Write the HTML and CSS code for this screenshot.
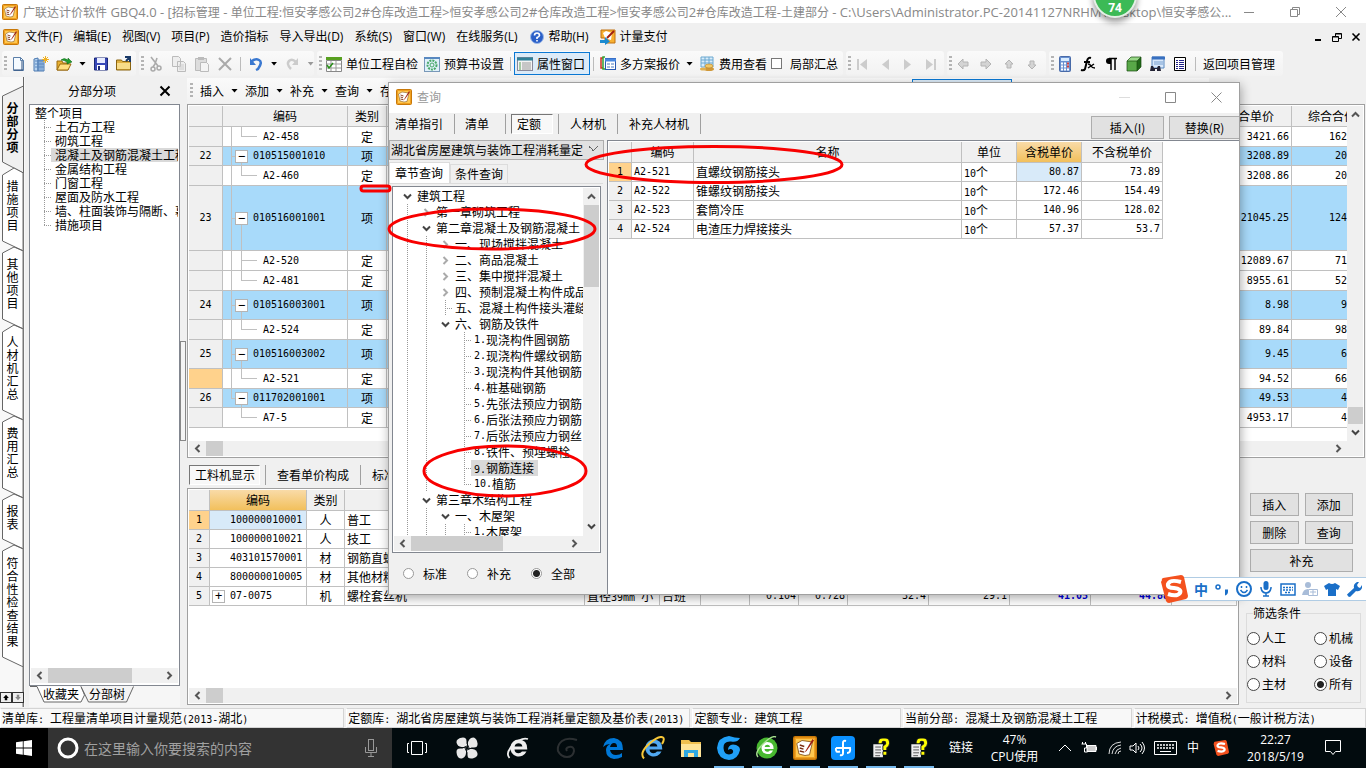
FILE: index.html
```html
<!DOCTYPE html>
<html lang="zh-CN">
<head>
<meta charset="utf-8">
<title>广联达计价软件 GBQ4.0</title>
<link rel="stylesheet" href="styles.css">
</head>
<body>
<svg class="defs" aria-hidden="true">
  <symbol id="app" viewBox="0 0 16 16"><rect x=".5" y=".5" width="15" height="15" rx="1" fill="#f0a020" stroke="#c87808"/><rect x="2" y="2" width="12" height="12" fill="#ffc850"/><path d="M2.500 5l3.500-2 7 1-2 8.500-3 .5-4-1z" fill="#fff" stroke="#8a5a20" stroke-width=".6"/><path d="M4.500 6l3 1M4.500 8l2.500.8M4.500 10l3 .8" stroke="#7a2c10" stroke-width=".9" fill="none"/><path d="M13 2l1 1-5 7-1.300 1z" fill="#a02010"/></symbol>
  <symbol id="left" viewBox="0 0 9 9"><path d="M6.500 1L3 4.500 6.500 8" fill="none" stroke="#555" stroke-width="2"/></symbol>
  <symbol id="right" viewBox="0 0 9 9"><path d="M2.500 1L6 4.500 2.500 8" fill="none" stroke="currentColor" stroke-width="2"/></symbol>
  <symbol id="up" viewBox="0 0 9 9"><path d="M1 6.500L4.500 3 8 6.500" fill="none" stroke="#555" stroke-width="2"/></symbol>
  <symbol id="down" viewBox="0 0 9 9"><path d="M1 2.500L4.500 6 8 2.500" fill="none" stroke="#444" stroke-width="2"/></symbol>
  <symbol id="sogou" viewBox="0 0 28 28"><path d="M2 5Q1 4 3 3L21 0Q23 0 24 2L28 21Q28 23 26 24L9 28Q7 28 6 26L1 7Z" fill="#f4511e"/><path d="M21 7Q10 4 8 9Q7 13 14 13Q22 14 20 18Q17 22 8 19" fill="none" stroke="#fff" stroke-width="4"/></symbol>
  <symbol id="note" viewBox="0 0 20 20"><path d="M2 6h10v14H2z" fill="#eee"/><path d="M4 9h6M4 12h6M4 15h6M4 18h5" stroke="#555"/><path d="M9 5Q9 1 13 1T17 5Q17 7 14 9V12M14 14v3" fill="none" stroke="#222" stroke-width="5"/><path d="M9 5Q9 1 13 1T17 5Q17 7 14 9V12M14 14v3" fill="none" stroke="#ff0" stroke-width="3"/></symbol>
  <symbol id="ee" viewBox="0 0 24 24"><path d="M12.500 3.500a8.500 8.500 0 108 12h-4.500q-1.200 1.800-3.500 1.800-3.700 0-4-3.800h12.800Q21.500 3.500 12.500 3.500zM8.600 10.500q.6-3.200 3.900-3.200t3.900 3.200z" fill="currentColor" fill-rule="evenodd"/></symbol>
</svg>

<header class="title">
  <svg class="ic"><use href="#app"/></svg>
  <h1>广联达计价软件<span> GBQ4.0 - [</span>招标管理<span> - </span>单位工程<span>:</span>恒安孝感公司<span>2#</span>仓库改造工程<span>&gt;</span>恒安孝感公司<span>2#</span>仓库改造工程<span>&gt;</span>恒安孝感公司<span>2#</span>仓库改造工程<span>-</span>土建部分<span> - C:\Users\Administrator.PC-20141127NRHM\Desktop\</span>恒安孝感公<span>...</span></h1>
  <div class="winbtns">
    <button aria-label="最小化"><svg viewBox="0 0 10 10"><path d="M0 5.500h10" stroke="#888"/></svg></button>
    <button aria-label="还原"><svg viewBox="0 0 10 10"><path d="M.5 2.500h7v7h-7zM2.500 2.500v-2h7v7h-2" stroke="#888" fill="none"/></svg></button>
    <button aria-label="关闭"><svg viewBox="0 0 10 10"><path d="M0 0l10 10M10 0L0 10" stroke="#888"/></svg></button>
  </div>
</header>
<div class="speed">74</div>

<nav class="menu">
  <svg class="ic"><use href="#app"/></svg>
  <button>文件(F)</button><button>编辑(E)</button><button>视图(V)</button><button>项目(P)</button><button>造价指标</button><button>导入导出(D)</button><button>系统(S)</button><button>窗口(W)</button><button>在线服务(L)</button>
  <button><svg class="ic" viewBox="0 0 16 16"><circle cx="8" cy="8" r="6.500" fill="#2a5fc8" stroke="#9ab8e8"/><path d="M5.500 6.500Q5.500 4 8 4T10.500 6.500Q10 8 8 8.500v1.500M8 11v1.500" fill="none" stroke="#fff" stroke-width="1.600"/></svg>帮助(H)</button>
  <button><svg class="ic" viewBox="0 0 16 16"><path d="M1 1h14v13H5V9H1z" fill="#f8b030" stroke="#c07010"/><path d="M3 4l3-2 6 2-1 7-6-2z" fill="#fff"/><path d="M14 2L7 9" stroke="#a02010" stroke-width="2"/><path d="M0 11h5V8l5 4.500-5 3.500v-2H0z" fill="#1a8ad0"/></svg>计量支付</button>
  <div class="mdi"><button aria-label="最小化">
    <svg viewBox="0 0 10 10"><path d="M2 8h6" stroke="#000" stroke-width="2"/></svg></button><button aria-label="还原"><svg viewBox="0 0 10 10"><path d="M.5 4.500h6v5h-6zM.5 5h6M3.500 4V1.500h6v5H7M3.500 2h6" fill="none" stroke="#000"/></svg></button><button aria-label="关闭"><svg viewBox="0 0 10 10"><path d="M1.500 1.500l7 7M8.500 1.500l-7 7" stroke="#000" stroke-width="1.600"/></svg></button>
  </div>
</nav>

<div class="bars">
  <div class="bar b1">
    <button aria-label="新建"><svg class="ic" viewBox="0 0 16 16"><path d="M3.500 1.500h7l3 3v10h-10z" fill="#f4faff" stroke="#5a7ea8"/><path d="M10.500 1.500v3h3" fill="none" stroke="#5a7ea8"/><path d="M12 5v9M4 14h9" stroke="#2a4a78"/></svg></button>
    <button aria-label="新建项目"><svg class="ic" viewBox="0 0 16 16"><path d="M1 3l4-1v13H1zM5 4h6v11H5z" fill="#b8d4f0" stroke="#4a78b0"/><path d="M2 5h9M2 8h9M2 11h9M7 4v11M9 4v11" stroke="#5a88c0"/><path d="M12.500 0v7M9 3.500h7M10 1l5 5M15 1l-5 5" stroke="#f0b020"/></svg></button>
    <button aria-label="打开"><svg class="ic" viewBox="0 0 16 16"><path d="M1 14V5h5l1 2h5v7z" fill="#e8b030" stroke="#9a6a10"/><path d="M1 14l3-6h11l-3 6z" fill="#ffe080" stroke="#9a6a10"/><path d="M5 4Q8 1 12 4V2l4 4-5 2V6Q8 4 5 4z" fill="#20a030" stroke="#0a6010" stroke-width=".5"/></svg></button>
    <i class="caret"></i>
    <button aria-label="保存"><svg class="ic" viewBox="0 0 16 16"><path d="M1.500 2h13v12h-13z" fill="#3848b8" stroke="#1a2878"/><path d="M4 2h8v5H4z" fill="#e8ecff"/><path d="M4 9h8v5H4z" fill="#fff"/><path d="M5 10h2v4H5z" fill="#1a2878"/></svg></button>
    <button aria-label="归档"><svg class="ic" viewBox="0 0 16 16"><path d="M.5 4h5l1 1.500h8V14H.5z" fill="#e0b040" stroke="#8a6410"/><path d="M1 7h13v6H1z" fill="#f8dc88"/><path d="M9 1h5v5M14 1l-4 4" stroke="#1a3a68" stroke-width="2" fill="none"/></svg></button>
  </div>
  <div class="bar b2">
    <button aria-label="剪切"><svg class="ic" viewBox="0 0 16 16"><path d="M3 1l7 9M9 2L7 8l-2 3" stroke="#aaa" stroke-width="1.600" fill="none"/><circle cx="11" cy="12" r="2" fill="none" stroke="#aaa" stroke-width="1.500"/><circle cx="5" cy="13" r="2" fill="none" stroke="#aaa" stroke-width="1.500"/></svg></button>
    <button aria-label="复制"><svg class="ic" viewBox="0 0 16 16"><path d="M1.500.5h6l2 2v8h-8zM6.500 5.500h6l2 2v8h-8z" fill="#eee" stroke="#bbb"/><path d="M8 9h5M8 11h5M8 13h5" stroke="#ccc"/></svg></button>
    <button aria-label="粘贴"><svg class="ic" viewBox="0 0 16 16"><path d="M1.500 2.500h11v12h-11z" fill="#ddd" stroke="#bbb"/><path d="M4 1h6v3H4z" fill="#bbb"/><path d="M6.500 6.500h6l2 2v7h-8z" fill="#f4f4f4" stroke="#bbb"/></svg></button>
    <button aria-label="删除"><svg class="ic" viewBox="0 0 16 16"><path d="M2 2l12 12M14 2L2 14" stroke="#aaa" stroke-width="2"/></svg></button>
    <i class="sep"></i>
    <button aria-label="撤销"><svg class="ic" viewBox="0 0 16 16"><path d="M3 6Q7 2 11 4T10 13l-2 1" fill="none" stroke="#3a78d0" stroke-width="2.500"/><path d="M2 2v7h6z" fill="#3a78d0"/></svg></button>
    <i class="caret"></i>
    <button aria-label="恢复"><svg class="ic" viewBox="0 0 16 16"><path d="M12 6Q8 2 5 5T7 13" fill="none" stroke="#ccc" stroke-width="2.500"/><path d="M14 2v7H8z" fill="#ccc"/></svg></button>
    <i class="caret dim"></i>
  </div>
  <div class="bar b3">
    <button><svg class="ic" viewBox="0 0 16 16"><path d="M0 1h16v3H0z" fill="#58a020"/><path d="M.5 4.500h15v11H.5z" fill="#fff" stroke="#888"/><path d="M1 8h14M1 12h14M5 5v10M10 5v10" stroke="#999"/><path d="M1 9l2 3 4-5" fill="none" stroke="#289018" stroke-width="1.500"/></svg>单位工程自检</button>
    <button><svg class="ic" viewBox="0 0 16 16"><rect x=".5" y="1.500" width="15" height="14" fill="#e0f0fa" stroke="#7898b8"/><path d="M0 2h16" stroke="#5888c0" stroke-width="2"/><circle cx="8" cy="9" r="4.500" fill="none" stroke="#48a868" stroke-width="2" stroke-dasharray="2 1"/><circle cx="8" cy="9" r="2" fill="none" stroke="#48a868"/></svg>预算书设置</button>
    <i class="sep"></i>
    <button class="on"><svg class="ic" viewBox="0 0 16 16"><rect x=".5" y="1.500" width="15" height="13" fill="#f4f4f4" stroke="#889"/><path d="M0 3h16" stroke="#308098" stroke-width="3"/><path d="M2 7h2M2 9h2M2 11h2M2 13h2" stroke="#58a058"/><path d="M5 7h9M5 9h9M5 11h9M5 13h9" stroke="#999"/></svg>属性窗口</button>
    <i class="sep"></i>
    <button><svg class="ic" viewBox="0 0 16 16"><path d="M3 2H1v10h2" fill="none" stroke="#d03020" stroke-width="1.500"/><path d="M5 1H3v12h2" fill="none" stroke="#30a030" stroke-width="1.500"/><rect x="5.500" y="2.500" width="10" height="11" fill="#fff" stroke="#2858b0"/><path d="M5 4h11" stroke="#4888e0" stroke-width="3"/><path d="M7 8h3M11 8h3M7 11h3M11 11h3" stroke="#4878c0"/></svg>多方案报价</button>
    <i class="caret"></i>
    <button><svg class="ic" viewBox="0 0 16 16"><path d="M2 1h12v10H2z" fill="#d8ecfa" stroke="#6aa8d0"/><path d="M2 4h12M2 7h12M6 1v10M10 1v10" stroke="#6aa8d0"/><ellipse cx="10" cy="13" rx="5" ry="2" fill="#d09838"/><ellipse cx="10" cy="10" rx="4" ry="2" fill="#f0c868" stroke="#b88020" stroke-width=".6"/><ellipse cx="4" cy="13" rx="3" ry="1.500" fill="#e0b050"/></svg>费用查看</button>
    <label><input type="checkbox">局部汇总</label>
  </div>
  <div class="bar b4">
    <button aria-label="首行"><svg class="ic" viewBox="0 0 16 16"><path d="M4 3v11" stroke="#ccc" stroke-width="2"/><path d="M13 3v11L6 8.500z" fill="#ccc"/></svg></button>
    <button aria-label="上一行"><svg class="ic" viewBox="0 0 16 16"><path d="M12 3v11L5 8.500z" fill="#ccc"/></svg></button>
    <button aria-label="下一行"><svg class="ic" viewBox="0 0 16 16"><path d="M4 3v11l7-5.500z" fill="#ccc"/></svg></button>
    <button aria-label="末行"><svg class="ic" viewBox="0 0 16 16"><path d="M12 3v11" stroke="#ccc" stroke-width="2"/><path d="M3 3v11l7-5.500z" fill="#ccc"/></svg></button>
  </div>
  <div class="bar b5">
    <button aria-label="左移"><svg class="ic" viewBox="0 0 16 16"><path d="M3 8l5-5v3h5v4H8v3z" fill="#d4d4d4" stroke="#b4b4b4"/></svg></button>
    <button aria-label="右移"><svg class="ic" viewBox="0 0 16 16"><path d="M13 8L8 3v3H3v4h5v3z" fill="#d4d4d4" stroke="#b4b4b4"/></svg></button>
    <button aria-label="上移"><svg class="ic" viewBox="0 0 16 16"><path d="M8 4l4 4h-2v4H6V8H4z" fill="#d4d4d4" stroke="#b4b4b4"/></svg></button>
    <button aria-label="下移"><svg class="ic" viewBox="0 0 16 16"><path d="M8 13l4-4h-2V5H6v4H4z" fill="#d4d4d4" stroke="#b4b4b4"/></svg></button>
  </div>
  <div class="bar b6">
    <button aria-label="计算器"><svg class="ic" viewBox="0 0 16 16"><rect x="2.500" y=".5" width="11" height="15" rx="1" fill="#6890d0" stroke="#486aa8"/><path d="M4 2h8v3H4z" fill="#d8ecff"/><path d="M4 7.500h8M4 10.500h8M4 13.500h8" stroke="#fff" stroke-width="2" stroke-dasharray="2 1"/><path d="M10 7.500h2M10 10.500h2" stroke="#d04040" stroke-width="2"/></svg></button>
    <button aria-label="函数"><svg class="ic" viewBox="0 0 16 16"><path d="M11 2Q8 1 7 5L5 13Q4 15 1 14M4 6h6" fill="none" stroke="#000" stroke-width="2"/><path d="M8 8q2 0 3 2t4 2M14 8l-6 4" fill="none" stroke="#000" stroke-width="1.500"/></svg></button>
    <button aria-label="段落"><svg class="ic" viewBox="0 0 16 16"><path d="M14 2.500H6M8 2v12M12 2v12" stroke="#000" stroke-width="1.500"/><path d="M8 2H6a3 3 0 000 6h2z"/></svg></button>
    <button aria-label="图元"><svg class="ic" viewBox="0 0 16 16"><path d="M1 5l4-4h10l-4 4z" fill="#98d888"/><path d="M1 5h10v10H1z" fill="#58a848"/><path d="M11 5l4-4v10l-4 4z" fill="#206818"/><path d="M1 5l4-4h10v10l-4 4H1zM1 5h10v10M11 5l4-4" fill="none" stroke="#184c10" stroke-width=".7"/></svg></button>
    <button aria-label="查找"><svg class="ic" viewBox="0 0 16 16"><path d="M3 1h12v11H3z" fill="#d8e8fa" stroke="#5888c0"/><path d="M3 2h13" stroke="#3870c0" stroke-width="3"/><path d="M5 6h9M5 8h9" stroke="#78a0d0"/><path d="M2 10h2l1 2h3l1-2h2l1 5H8v-2H6v2H1z" fill="#223"/></svg></button>
    <button aria-label="报表"><svg class="ic" viewBox="0 0 16 16"><path d="M2.500 1.500h11v13h-11z" fill="#fff" stroke="#000"/><path d="M4 4.500h2M4 6.500h2M4 8.500h2M4 10.500h2M4 12.500h2M7 4.500h5M7 6.500h5M7 8.500h5M7 10.500h5M7 12.500h5" stroke="#228"/></svg></button>
    <i class="sep"></i>
    <button>返回项目管理</button>
  </div>
</div>

<main>
  <nav class="rail">
    <svg class="rail-lines" viewBox="0 0 24 630"><g fill="#fff" stroke="#666"><path d="M23.500 0V9L2.500 19V85L23.500 96z" fill="#f0f0f0"/><path d="M23.500 96L14 91 2.500 98v66l21 10zM23.500 174L14 170 2.500 176v66l21 10zM23.500 252L14 248 2.500 255v78l21 10zM23.500 343L14 339 2.500 345v66l21 10zM23.500 421L14 417 2.500 423v39l21 10zM23.500 472L14 468 2.500 474v106l21 10z"/></g><path d="M23.500 96V630" stroke="#777" stroke-width="2"/></svg>
    <button class="cur">分部分项</button><button>措施项目</button><button>其他项目</button><button>人材机汇总</button><button>费用汇总</button><button>报表</button><button>符合性检查结果</button>
    <div class="railnav"><button aria-label="向上"><svg viewBox="0 0 11 11"><path d="M5.500 2L9 6H7v3H4V6H2z" fill="#000"/></svg></button><button aria-label="向下"><svg viewBox="0 0 11 11"><path d="M5.500 9L9 5H7V2H4v3H2z" fill="#888"/></svg></button></div>
  </nav>

  <section class="side">
    <div class="side-head"><h2>分部分项</h2><button aria-label="关闭"><svg viewBox="0 0 12 12"><path d="M1.500 1.500l9 9M10.500 1.500l-9 9" stroke="#000" stroke-width="2"/></svg></button></div>
    <div class="side-box">
      <ul class="st"><li class="root">整个项目</li><li>土石方工程</li><li>砌筑工程</li><li class="sel">混凝土及钢筋混凝土工程</li><li>金属结构工程</li><li>门窗工程</li><li>屋面及防水工程</li><li>墙、柱面装饰与隔断、幕墙</li><li class="last">措施项目</li></ul>
      <div class="hs"><svg class="ar"><use href="#left"/></svg><i class="thumb t-side"></i><svg class="ar end"><use href="#right"/></svg></div>
    </div>
    <div class="side-tabs"><svg viewBox="0 0 150 20"><path d="M1 .5h7l7 15.500h37l3.500-7L52 .5" fill="#fff" stroke="#666"/><path d="M52 .5l7.500 15.500h38l7-15.500" fill="#f4f4f4" stroke="#666"/></svg><button>收藏夹</button><button>分部树</button></div>
  </section>
  <div class="split"><i></i></div>

  <section class="work">
    <div class="sub">
      <button>插入</button><i class="caret"></i><button>添加</button><i class="caret"></i><button>补充</button><i class="caret"></i><button>查询</button><i class="caret"></i><button>存档</button><i class="subon"></i>
    </div>
    <div class="box top">
      <div class="body">
        <div class="view">
        <table class="g main">
          <colgroup><col class="w34"><col class="w125"><col class="w39"><col><col class="w83"><col class="w55"></colgroup>
          <thead><tr><th></th><th>编码</th><th>类别</th><th></th><th>综合单价</th><th class="cut">综合合价</th></tr></thead>
          <tbody>
          <tr><th></th><td class="c">A2-458</td><td>定</td><td></td><td class="r">3421.66</td><td class="e">162</td></tr>
          <tr class="p r19"><th>22</th><td class="p"><button>−</button>010515001010</td><td>项</td><td></td><td class="r">3208.89</td><td class="e">20</td></tr>
          <tr><th></th><td class="c">A2-460</td><td>定</td><td></td><td class="r">3208.86</td><td class="e">20</td></tr>
          <tr class="p r65"><th>23</th><td class="p"><button>−</button>010516001001</td><td>项</td><td></td><td class="r">21045.25</td><td class="e">124</td></tr>
          <tr><th></th><td class="c mid">A2-520</td><td>定</td><td></td><td class="r">12089.67</td><td class="e">71</td></tr>
          <tr><th></th><td class="c">A2-481</td><td>定</td><td></td><td class="r">8955.61</td><td class="e">52</td></tr>
          <tr class="p r29"><th>24</th><td class="p"><button>−</button>010516003001</td><td>项</td><td></td><td class="r">8.98</td><td class="e">9</td></tr>
          <tr><th></th><td class="c">A2-524</td><td>定</td><td></td><td class="r">89.84</td><td class="e">98</td></tr>
          <tr class="p r29"><th>25</th><td class="p"><button>−</button>010516003002</td><td>项</td><td></td><td class="r">9.45</td><td class="e">6</td></tr>
          <tr><th class="hot"></th><td class="c">A2-521</td><td>定</td><td></td><td class="r">94.52</td><td class="e">66</td></tr>
          <tr class="p r19"><th>26</th><td class="p fin"><button>−</button>011702001001</td><td>项</td><td></td><td class="r">49.53</td><td class="e">4</td></tr>
          <tr><th></th><td class="c fin">A7-5</td><td>定</td><td></td><td class="r">4953.17</td><td class="e">4</td></tr>
          </tbody>
        </table>
        </div>
        <div class="vs"><svg class="ar"><use href="#up"/></svg><i class="thumb t-top"></i><svg class="ar"><use href="#down"/></svg></div>
      </div>
      <div class="hs wide"><svg class="ar"><use href="#left"/></svg><i class="thumb t-min"></i><svg class="ar end"><use href="#right"/></svg></div>
    </div>

    <div class="tabs low"><button class="on">工料机显示</button><button>查看单价构成</button><button>标准换算</button></div>

    <div class="lower">
      <div class="box bot">
        <div class="view">
        <table class="g res">
          <colgroup><col class="w21"><col class="w97"><col class="w38"><col class="w240"><col class="w75"><col class="w41"><col class="w49"><col class="w49"><col class="w49"><col class="w81"><col class="w81"><col class="w81"><col class="w81"><col></colgroup>
          <thead><tr><th></th><th class="hh">编码</th><th>类别</th><th></th><th></th><th></th><th></th><th></th><th></th><th></th><th></th><th></th><th></th><th></th></tr></thead>
          <tbody>
          <tr><th class="hot">1</th><td class="k cell">100000010001</td><td>人</td><td class="l">普工</td><td></td><td></td><td></td><td></td><td></td><td></td><td></td><td></td><td></td><td></td></tr>
          <tr><th>2</th><td class="k">100000010021</td><td>人</td><td class="l">技工</td><td></td><td></td><td></td><td></td><td></td><td></td><td></td><td></td><td></td><td></td></tr>
          <tr><th>3</th><td class="k">403101570001</td><td>材</td><td class="l">钢筋直螺纹接头</td><td></td><td></td><td></td><td></td><td></td><td></td><td></td><td></td><td></td><td></td></tr>
          <tr><th>4</th><td class="k">800000010005</td><td>材</td><td class="l">其他材料费</td><td></td><td></td><td></td><td></td><td></td><td></td><td></td><td></td><td></td><td></td></tr>
          <tr><th>5</th><td class="k x"><button>+</button>07-0075</td><td>机</td><td class="l">螺栓套丝机</td><td class="l">直径<span class="n">39mm </span>小</td><td class="l">台班</td><td></td><td class="r">0.104</td><td class="r">0.728</td><td class="r">32.4</td><td class="r">29.1</td><td class="r blue">41.05</td><td class="r blue">44.88</td><td></td></tr>
          </tbody>
        </table>
        </div>
        <div class="hs"><svg class="ar"><use href="#left"/></svg><i class="thumb t-min"></i><svg class="ar end"><use href="#right"/></svg></div>
      </div>
      <aside class="acts">
        <div class="btns"><button>插入</button><button>添加</button><button>删除</button><button>查询</button><button class="full">补充</button><button class="full" aria-label="替换"></button></div>
        <fieldset><legend>筛选条件</legend>
          <label><input type="radio" name="f">人工</label><label><input type="radio" name="f">机械</label>
          <label><input type="radio" name="f">材料</label><label><input type="radio" name="f">设备</label>
          <label><input type="radio" name="f">主材</label><label><input type="radio" name="f" checked>所有</label>
        </fieldset>
      </aside>
    </div>
  </section>
</main>

<footer class="status">
  <span class="s1">清单库<span class="n">: </span>工程量清单项目计量规范<span class="n">(2013-</span>湖北<span class="n">)</span></span>
  <span class="s2">定额库<span class="n">: </span>湖北省房屋建筑与装饰工程消耗量定额及基价表<span class="n">(2013)</span></span>
  <span class="s3">定额专业<span class="n">: </span>建筑工程</span>
  <span class="s4">当前分部<span class="n">: </span>混凝土及钢筋混凝土工程</span>
  <span class="s5">计税模式<span class="n">: </span>增值税<span class="n">(</span>一般计税方法<span class="n">)</span></span>
</footer>

<div class="task">
  <button class="start" aria-label="开始"><svg viewBox="0 0 16 16"><path d="M0 2.300l6.800-1v6.300H0zM7.600 1.200L16 0v7.600H7.600zM0 8.400h6.800v6.300L0 13.700zM7.600 8.400H16V16l-8.400-1.200z" fill="#fff"/></svg></button>
  <label class="search"><svg class="ring" viewBox="0 0 22 22"><circle cx="11" cy="11" r="9" fill="none" stroke="#fff" stroke-width="3"/></svg><input type="text" placeholder="在这里输入你要搜索的内容"><svg class="mic" viewBox="0 0 12 18"><rect x="3.500" y=".5" width="5" height="11" fill="none" stroke="#999"/><path d="M.5 8v5.500h11V8M6 14v3M3 17.500h6" fill="none" stroke="#999"/></svg></label>
  <div class="apps">
    <button aria-label="任务视图"><svg viewBox="0 0 24 24"><path d="M6.500 5.500h11v13h-11zM4 7.500H2.500v9H4M20 7.500h1.500v9H20" fill="none" stroke="#fff"/></svg></button>
    <button class="a2" aria-label="应用"><svg viewBox="0 0 24 24"><g fill="#e8e8e8"><path d="M12 11Q4 12 2 8T5 2Q11 0 12 5z"/><path d="M13 12Q12 4 16 2T22 5Q24 11 19 12z"/><path d="M12 13Q20 12 22 16T19 22Q13 24 12 19z"/><path d="M11 12Q12 20 8 22T2 19Q0 13 5 12z"/></g><path d="M12 2Q11 8 14 12M22 12Q16 11 12 14M12 22Q13 16 10 12M2 12Q8 13 12 10" fill="none" stroke="#020b0e"/></svg></button>
    <button class="a3" aria-label="浏览器"><svg viewBox="0 0 24 24" color="#eee"><use href="#ee"/><path d="M3.500 22Q-1 17 7 9T22 3" fill="none" stroke="#eee" stroke-width="1.800"/></svg></button>
    <button class="a4" aria-label="游戏"><svg viewBox="0 0 24 24"><path d="M22 4Q12 1 7 5T3 15Q6 21 12 21T19 15Q19 10 14 11Q10 12 12 15" fill="none" stroke="#2c3032" stroke-width="2"/></svg></button>
    <button class="a5" aria-label="Edge"><svg viewBox="0 0 24 24"><path d="M2 11Q4 2 13 2Q22 3 22 14H9Q10 19 15 19Q19 19 21 17V21Q17 23 13 23Q5 22 5 14Q5 10 9 8Q5 8 2 11M9 11H16Q16 7 13 7Q10 7 9 11" fill="#0078d7" fill-rule="evenodd"/></svg></button>
    <button aria-label="IE"><svg viewBox="0 0 24 24" color="#50a8f0"><use href="#ee"/><path d="M3 22.500Q-2 17 8 8T22 1.500Q24 3 21 8" fill="none" stroke="#f8c838" stroke-width="2"/></svg></button>
    <button aria-label="资源管理器"><svg viewBox="0 0 24 24"><path d="M2 4h8l2 2h10v14H2z" fill="#f0c050"/><path d="M2 8h20v13H2z" fill="#ffe498"/><path d="M5 21v-7h14v7h-4v-4H9v4z" fill="#30a8e0"/></svg></button>
    <button class="run" aria-label="广联达"><svg viewBox="0 0 24 24"><path d="M23 2Q20 7 14 5.500Q6 5 6.500 12Q7 18.500 12 18.500Q17 18 16 14.500Q14 12 11 14Q11 9 16 8.500Q23 9 23 14Q21 23.500 12 24Q1 23 0 12Q1 1 12 0Q18 2 23 2z" fill="#20a0f8"/></svg></button>
    <button class="run" aria-label="安全浏览器"><svg viewBox="0 0 24 24" color="#fff"><circle cx="12" cy="12" r="10.500" fill="#48b830"/><use href="#ee" x="3.500" y="3.500" width="17" height="17"/><path d="M3 21Q-1 17 8 8T21 1" fill="none" stroke="#a8e090" stroke-width="1.500"/></svg></button>
    <button class="run" aria-label="计价"><svg viewBox="0 0 16 16"><use href="#app"/></svg></button>
    <button class="run" aria-label="助手"><svg viewBox="0 0 24 24"><rect width="24" height="24" rx="4" fill="#0a90ff"/><path d="M15 5Q12 4 12 7V17Q12 20 9 19M5 12H19Q20 17 16 17M5 12Q4 17 9 15.500" fill="none" stroke="#fff" stroke-width="2"/></svg></button>
    <button class="run" aria-label="提示一"><svg viewBox="0 0 20 20"><use href="#note" x="2" y="2" width="16" height="16"/></svg></button>
    <button class="run" aria-label="提示二"><svg viewBox="0 0 20 20"><use href="#note" x="2" y="2" width="16" height="16"/></svg></button>
  </div>
  <div class="tray">
    <button class="link">链接</button>
    <div class="cpu">47%<br>CPU使用</div>
    <svg class="t1" viewBox="0 0 12 12"><path d="M0 9l6-6 6 6" stroke="#fff" fill="none"/></svg>
    <svg class="t2" viewBox="0 0 16 16"><path d="M5.500 5.500h9v6h-9z" stroke="#fff" fill="#ccc"/><path d="M0 4h5v4H3v4h3M1 4V2M4 4V2M15 7v3" stroke="#fff" fill="none"/></svg>
    <svg class="t3" viewBox="0 0 14 14"><path d="M1 13Q1 2 13 1M4 13Q5 5 13 4M7 13Q8 8 13 7M10 13Q10 10 13 10" stroke="#ddd" fill="none"/></svg>
    <svg class="t4" viewBox="0 0 16 14"><path d="M1 5h3l3-3v10L4 9H1z M9 5q2 2 0 4M11 3q4 4 0 8M13 1q5 6 0 12" stroke="#fff" fill="none"/></svg>
    <svg class="t5" viewBox="0 0 23 14"><path d="M.5 .5h22v13H.5z" stroke="#fff" fill="none"/><path d="M3 4h17M3 7h17" stroke="#fff" stroke-width="1.500" stroke-dasharray="2 1"/><path d="M6 10.500h11" stroke="#fff"/></svg>
    <span class="ime">中</span>
    <svg class="t6" viewBox="0 0 28 28"><use href="#sogou"/></svg>
    <div class="clock">22:27<br>2018/5/19</div>
    <svg class="t7" viewBox="0 0 18 18"><path d="M1.500 1.500h15v11h-5l-2.500 3-2.500-3h-5z" stroke="#fff" fill="none"/></svg>
  </div>
</div>

<div class="dlg" role="dialog" aria-label="查询">
  <div class="dt"><svg class="ic"><use href="#app"/></svg><h2>查询</h2>
    <button aria-label="最小化"><svg viewBox="0 0 11 11"><path d="M0 5.500h11" stroke="#ddd"/></svg></button>
    <button aria-label="最大化"><svg viewBox="0 0 11 11"><path d="M.5.500h10v10H.5z" stroke="#888" fill="none"/></svg></button>
    <button aria-label="关闭"><svg viewBox="0 0 11 11"><path d="M.5.500l10 10M10.500.500l-10 10" stroke="#888"/></svg></button></div>
  <div class="dbar">
    <div class="tabs"><button>清单指引</button><button>清单</button><button class="on">定额</button><button>人材机</button><button>补充人材机</button></div>
    <button class="push">插入(I)</button><button class="push">替换(R)</button>
  </div>
  <div class="dmain">
    <div class="dl">
      <select aria-label="定额库"><option>湖北省房屋建筑与装饰工程消耗量定</option></select>
      <div class="dtabs"><button class="on">章节查询</button><button>条件查询</button></div>
      <div class="dtree">
        <div class="tv">
          <ul>
            <li><svg class="o"><use href="#down"/></svg>建筑工程</li>
            <li><i class="v"></i><svg class="k"><use href="#right"/></svg>第一章砌筑工程</li>
            <li><i class="v"></i><svg class="o"><use href="#down"/></svg>第二章混凝土及钢筋混凝土</li>
            <li><i class="v"></i><i class="v"></i><svg class="k"><use href="#right"/></svg>一、现场搅拌混凝土</li>
            <li><i class="v"></i><i class="v"></i><svg class="k"><use href="#right"/></svg>二、商品混凝土</li>
            <li><i class="v"></i><i class="v"></i><svg class="k"><use href="#right"/></svg>三、集中搅拌混凝土</li>
            <li><i class="v"></i><i class="v"></i><svg class="k"><use href="#right"/></svg>四、预制混凝土构件成品</li>
            <li><i class="v"></i><i class="v"></i><i class="t"></i>五、混凝土构件接头灌缝</li>
            <li><i class="v"></i><i class="v"></i><svg class="o"><use href="#down"/></svg>六、钢筋及铁件</li>
            <li><i class="v"></i><i class="v"></i><i></i><i class="t"></i><span class="n">1.</span>现浇构件圆钢筋</li>
            <li><i class="v"></i><i class="v"></i><i></i><i class="t"></i><span class="n">2.</span>现浇构件螺纹钢筋</li>
            <li><i class="v"></i><i class="v"></i><i></i><i class="t"></i><span class="n">3.</span>现浇构件其他钢筋</li>
            <li><i class="v"></i><i class="v"></i><i></i><i class="t"></i><span class="n">4.</span>桩基础钢筋</li>
            <li><i class="v"></i><i class="v"></i><i></i><i class="t"></i><span class="n">5.</span>先张法预应力钢筋</li>
            <li><i class="v"></i><i class="v"></i><i></i><i class="t"></i><span class="n">6.</span>后张法预应力钢筋</li>
            <li><i class="v"></i><i class="v"></i><i></i><i class="t"></i><span class="n">7.</span>后张法预应力钢丝</li>
            <li><i class="v"></i><i class="v"></i><i></i><i class="t"></i><span class="n">8.</span>铁件、预埋螺栓</li>
            <li><i class="v"></i><i class="v"></i><i></i><i class="t"></i><span class="pick"><span class="n">9.</span>钢筋连接</span></li>
            <li><i class="v"></i><i class="v"></i><i></i><i class="t h"></i><span class="n">10.</span>植筋</li>
            <li><i class="v"></i><svg class="o"><use href="#down"/></svg>第三章木结构工程</li>
            <li><i class="v"></i><i class="v"></i><svg class="o"><use href="#down"/></svg>一、木屋架</li>
            <li><i class="v"></i><i class="v"></i><i class="v"></i><i class="t"></i><span class="n">1.</span>木屋架</li>
          </ul>
          <div class="vs"><svg class="ar"><use href="#up"/></svg><i class="thumb t-tree"></i><svg class="ar end"><use href="#down"/></svg></div>
        </div>
        <div class="hs wide"><svg class="ar"><use href="#left"/></svg><i class="thumb t-treeh"></i><svg class="ar end"><use href="#right"/></svg></div>
      </div>
      <div class="dradio"><label><input type="radio" name="k">标准</label><label><input type="radio" name="k">补充</label><label><input type="radio" name="k" checked>全部</label></div>
    </div>
    <div class="dr">
      <table class="g q">
        <colgroup><col class="w23"><col class="w62"><col class="w268"><col class="w55"><col class="w65"><col class="w81"></colgroup>
        <thead><tr><th></th><th>编码</th><th>名称</th><th>单位</th><th class="hh">含税单价</th><th>不含税单价</th></tr></thead>
        <tbody>
        <tr><th class="hot">1</th><td class="l m">A2-521</td><td class="l">直螺纹钢筋接头</td><td class="l"><span class="n">10</span>个</td><td class="r cell">80.87</td><td class="r">73.89</td></tr>
        <tr><th>2</th><td class="l m">A2-522</td><td class="l">锥螺纹钢筋接头</td><td class="l"><span class="n">10</span>个</td><td class="r">172.46</td><td class="r">154.49</td></tr>
        <tr><th>3</th><td class="l m">A2-523</td><td class="l">套筒冷压</td><td class="l"><span class="n">10</span>个</td><td class="r">140.96</td><td class="r">128.02</td></tr>
        <tr><th>4</th><td class="l m">A2-524</td><td class="l">电渣压力焊接接头</td><td class="l"><span class="n">10</span>个</td><td class="r">57.37</td><td class="r">53.7</td></tr>
        </tbody>
      </table>
    </div>
  </div>
</div>

<svg class="marks" viewBox="0 0 1366 768" aria-hidden="true"><g fill="none" stroke="#f80000" stroke-width="3"><rect x="361" y="186" width="29" height="5" rx="2.500"/><ellipse cx="714" cy="164.500" rx="128" ry="18"/><ellipse cx="492" cy="229" rx="103" ry="20"/><ellipse cx="505" cy="471" rx="81" ry="25"/></g></svg>

<div class="sogou">
  <svg class="logo" viewBox="0 0 28 28"><use href="#sogou"/></svg>
  <span>中</span>
  <svg viewBox="0 0 16 16"><circle cx="4" cy="6" r="2" fill="none" stroke="#1a6fc8" stroke-width="1.500"/><path d="M11 8.500h3v2q0 3-3 4" fill="#1a6fc8"/></svg>
  <svg viewBox="0 0 16 16"><circle cx="8" cy="8" r="7" fill="none" stroke="#1a6fc8" stroke-width="2"/><path d="M5.500 5v2M10.500 5v2M4.500 9q3.500 5 7 0" stroke="#1a6fc8" stroke-width="1.500" fill="none"/></svg>
  <svg viewBox="0 0 16 16"><rect x="5.500" y="0" width="5" height="9" rx="2.500" fill="#1a6fc8"/><path d="M3 6v1q1 5 5 5t5-5V6M8 12v3M5 15h6" fill="none" stroke="#1a6fc8" stroke-width="1.500"/></svg>
  <svg viewBox="0 0 16 16"><rect x="1" y="3" width="14" height="11" fill="#fff" stroke="#1a6fc8" stroke-width="1.500"/><path d="M3 6.500h10M3 9h10M5 11.500h6" stroke="#1a6fc8" stroke-width="1.500" stroke-dasharray="2 1"/></svg>
  <svg viewBox="0 0 16 16"><circle cx="6" cy="4" r="3" fill="#a8bcd8"/><path d="M0 14Q1 8 6 8v6z" fill="#a8bcd8"/><path d="M6.500 8.500h9v6h-9z" fill="#fff" stroke="#a8bcd8"/><path d="M8 11h6M11 9v5" stroke="#a8bcd8"/></svg>
  <svg viewBox="0 0 16 16"><path d="M5 2q3 2 6 0l5 3-2 4-2-1v7H4V8L2 9 0 5z" fill="#1a6fc8"/></svg>
  <svg viewBox="0 0 16 16"><path d="M1 13.500L8 7Q7 3 11 1h2l-2 3 1 2 2 1 2-3v3q-2 4-6 3l-6 6q-2 0-3-2.500z" fill="#1a6fc8"/></svg>
</div>
</body>
</html>
```
FILE: styles.css
```css
* { box-sizing: border-box; }
html, body { height: 100%; }
body {
  margin: 0;
  display: flex;
  flex-direction: column;
  position: relative;
  overflow: hidden;
  background: #f0f0f0;
  color: #000;
  font: 12px/16px "Noto Sans CJK SC", sans-serif;
}
button {
  border: 0;
  padding: 0;
  margin: 0;
  background: none;
  font: inherit;
  color: inherit;
  white-space: nowrap;
}
h1, h2 { margin: 0; font: inherit; }
ul { margin: 0; padding: 0; list-style: none; }
svg { display: block; flex: none; }
.defs { position: absolute; width: 0; height: 0; }
.ic { width: 16px; height: 16px; }
.n { font: 10px/12px "DejaVu Sans Mono", monospace; white-space: pre; }

/* title bar */
.title {
  flex: none;
  height: 23px;
  display: flex;
  align-items: center;
  gap: 5px;
  padding-left: 2px;
  background: #fff;
  color: #888;
}
.title h1 {
  flex: 1;
  min-width: 0;
  overflow: hidden;
  white-space: nowrap;
}
.title h1 span { font: 13px/16px "Open Sans", sans-serif; white-space: pre; }
.winbtns { display: flex; gap: 36px; padding: 0 20px 0 0; margin-left: auto; }
.winbtns svg { width: 10px; height: 10px; }
.speed {
  position: absolute;
  left: 1093px;
  top: -27px;
  width: 44px;
  height: 45px;
  padding-top: 25px;
  border: 2px solid #e4efe6;
  border-radius: 50%;
  background: #3cba56;
  box-shadow: 0 4px 6px #0006;
  color: #fff;
  font: bold 12px/16px "Open Sans", sans-serif;
  text-align: center;
}

/* menu */
.menu {
  flex: none;
  height: 27px;
  display: flex;
  align-items: center;
  gap: 11px;
  padding-left: 3px;
  font-family: "Open Sans", "Noto Sans CJK SC", sans-serif;
}
.menu > .ic { margin-right: -5px; }
.menu button { display: flex; align-items: center; gap: 4px; }
.mdi { margin-left: auto; display: flex; gap: 9px; padding-right: 5px; }
.mdi svg { width: 10px; height: 10px; }

/* toolbars */
.bars { flex: none; height: 27px; display: flex; gap: 3px; padding: 1px 0 1px 2px; }
.bar {
  display: flex;
  align-items: center;
  border-radius: 3px;
  background: linear-gradient(#fafafa, #f2f2f2);
}
.bar::before, .sub::before {
  content: "";
  width: 3px;
  height: 15px;
  margin: 0 6px 0 2px;
  background: repeating-linear-gradient(#b4b4b4 0 2px, transparent 2px 4px);
}
.bar button, .bar label { display: flex; align-items: center; gap: 4px; }
.b1 { width: 134px; gap: 7px; }
.b1::before { margin-right: -4px; }
.b2 { width: 175px; gap: 7px; }
.b2::before { margin-right: -3px; }
.b3 { width: 526px; gap: 6px; }
.b3::before { margin-right: -2px; }
.b3 label { margin-left: -2px; }
.b4 { width: 98px; gap: 7px; }
.b4::before { margin-right: -4px; }
.b5 { width: 99px; gap: 7px; }
.b5::before { margin-right: -4px; }
.b6 { width: 234px; gap: 7px; }
.b6::before { margin-right: -4px; }
.caret { width: 7px; height: 4px; background: #000; clip-path: polygon(0 0, 100% 0, 50% 100%); }
.dim { background: #999; }
.sep { width: 1px; height: 14px; background: #bbb; }
.bar .on { height: 23px; padding: 0 4px 0 2px; border: 1px solid #0a78d4; background: #dcebf8; margin: 0 -3px; }
input[type="checkbox"] {
  appearance: none;
  width: 11px;
  height: 11px;
  margin: 0 4px 0 0;
  border: 1px solid #777;
  background: #fff;
}

/* main area */
main { flex: 1; min-height: 0; display: flex; }
.rail { position: relative; flex: none; width: 25px; display: flex; flex-direction: column; align-items: center; background: #f8f8f8; }
.rail-lines { position: absolute; left: 0; top: 0; width: 24px; height: 630px; }
.rail > button {
  position: relative;
  width: 13px;
  padding: 11px 0 15px;
  font-size: 12px;
  line-height: 13px;
  white-space: normal;
  word-break: break-all;
}
.rail > .cur { padding-top: 24px; font-weight: bold; }
.railnav { position: relative; display: flex; width: 23px; margin: auto auto 4px 0; }
.railnav button { border: 1px solid #333; background: #eee; }
.railnav svg { width: 10px; height: 9px; }

.side { flex: none; width: 155px; padding-left: 4px; display: flex; flex-direction: column; }
.side-head { height: 27px; display: flex; align-items: center; padding: 0 9px 0 39px; justify-content: space-between; }
.side-head svg { width: 12px; height: 12px; }
.side-box { flex: 1; border: 1px solid #828790; background: #fff; display: flex; flex-direction: column; justify-content: space-between; padding: 1px 1px 2px; min-height: 0; }
.st li {
  --y: 14px;
  height: 14px;
  line-height: 14px;
  overflow: hidden;
  white-space: nowrap;
  padding-left: 24px;
  background:
    repeating-linear-gradient(#999 0 1px, transparent 1px 2px) 13px 0 / 1px var(--y) no-repeat,
    repeating-linear-gradient(90deg, #999 0 1px, transparent 1px 2px) 13px 7px / 8px 1px no-repeat;
}
.st .root { padding-left: 4px; background: none; }
.st .last { --y: 7px; }
.st .sel {
  background:
    repeating-linear-gradient(#999 0 1px, transparent 1px 2px) 13px 0 / 1px 14px no-repeat,
    repeating-linear-gradient(90deg, #999 0 1px, transparent 1px 2px) 13px 7px / 8px 1px no-repeat,
    linear-gradient(#d9d9d9, #d9d9d9) 20px 0 no-repeat;
}
.side-tabs { position: relative; height: 21px; display: flex; gap: 10px; padding-left: 14px; align-items: flex-start; background: #f6f6f6; }
.side-tabs svg { position: absolute; left: 0; top: 0; width: 150px; height: 20px; }
.side-tabs button { position: relative; }
.split { flex: none; width: 7px; padding-top: 264px; }
.split i { display: block; width: 6px; height: 100px; border: 1px solid #888; background: #f4f4f4; }

/* scrollbars */
.hs { flex: none; display: flex; align-items: center; height: 15px; background: #f0f0f0; }
.vs { flex: none; display: flex; flex-direction: column; align-items: center; width: 16px; background: #f0f0f0; }
.ar { width: 9px; height: 9px; margin: 4px; color: #555; }
.ar.end { margin-left: auto; }
.vs .end { margin: auto 4px 5px; }
.hs.wide { padding-right: 16px; }
.thumb { flex: none; background: #cdcdcd; }
.hs .thumb { height: 15px; }
.t-side { width: 84px; }
.t-min { width: 17px; }
.vs .thumb { width: 15px; }
.t-top { height: 17px; margin-top: auto; }
.t-tree { height: 82px; }
.t-treeh { width: 92px; }

/* working area */
.work { flex: 1; min-width: 0; display: flex; flex-direction: column; }
.sub { flex: none; height: 25px; width: 1022px; margin: 1px 0; display: flex; align-items: center; background: linear-gradient(#fafafa, #f2f2f2); }
.sub::before { margin: 0 7px 0 3px; }
.sub button { margin-right: 7px; }
.sub .caret { margin-right: 7px; }
.subon { width: 100px; height: 23px; margin-left: 501px; border: 1px solid #0a78d4; background: #dcebf8; }
.box { border: 1px solid #a0a0a0; background: #fff; display: flex; flex-direction: column; padding: 1px; min-width: 0; }
.top { flex: none; height: 354px; margin-right: 1px; }
.body { flex: 1; min-height: 0; display: flex; }
.view { flex: 1; min-width: 0; min-height: 0; overflow: hidden; }

table.g { border-collapse: separate; border-spacing: 0; table-layout: fixed; width: 100%; }
.g th, .g td {
  height: 19px;
  padding: 0;
  border: solid #c0c0c0;
  border-width: 0 1px 1px 0;
  font-weight: normal;
  line-height: 14px;
  text-align: center;
  white-space: nowrap;
  overflow: hidden;
}
.g th { background: #f0f0f0; }
.g thead th { height: 21px; }
.g tbody th, .g .r, .g .e, .g .k, .g .c, .g td.p, .g .m { font-family: "DejaVu Sans Mono", monospace; font-size: 10px; }
.main tbody th, .main td { height: 20px; }
.main tbody .r19 > * { height: 19px; }
.main .r65 > * { height: 65px; }
.main .r29 > * { height: 29px; }
.g .r { text-align: right; padding-right: 2px; }
.g .e { text-align: right; border-right: 0; }
.g .l { text-align: left; padding-left: 2px; }
.g .cut { text-align: left; padding-left: 16px; text-overflow: clip; border-right: 0; }
.g .c, .g td.p {
  --v: linear-gradient(#c0c0c0, #c0c0c0);
  text-align: left;
  padding-left: 40px;
  background: var(--v) 8px 0 / 1px 100% no-repeat, var(--v) 18px 0 / 1px 50% no-repeat, var(--v) 18px 50% / 16px 1px no-repeat;
}
.g .c.mid { background: var(--v) 8px 0 / 1px 100% no-repeat, var(--v) 18px 0 / 1px 100% no-repeat, var(--v) 18px 50% / 16px 1px no-repeat; }
.g .c.fin { background: var(--v) 18px 0 / 1px 50% no-repeat, var(--v) 18px 50% / 16px 1px no-repeat; }
.g td.p {
  padding-left: 12px;
  background: var(--v) 8px 0 / 1px 100% no-repeat, var(--v) 18px 100% / 1px 50% no-repeat, var(--v) 8px 50% / 6px 1px no-repeat;
}
.g td.p.fin { background: var(--v) 8px 0 / 1px 50% no-repeat, var(--v) 18px 100% / 1px 50% no-repeat, var(--v) 8px 50% / 6px 1px no-repeat; }
.g.main tr.p.p > td { background-color: #a8dafa; }
.g td button {
  width: 13px;
  height: 13px;
  margin-right: 5px;
  border: 1px solid #b4b4b4;
  background: #fff;
  font: 12px/11px "DejaVu Sans Mono", monospace;
  vertical-align: middle;
}
.g .hot { background: #ffd28c; }
.g .hh { background: linear-gradient(#f9dba8, #f2c05c); }
.g .cell { background: #d8eaf9; }
.g .k { text-align: left; padding-left: 20px; }
.g .k.x { padding-left: 2px; }
.g .blue { color: #0000e0; font-weight: bold; }
.w34 { width: 34px; } .w125 { width: 125px; } .w39 { width: 39px; } .w83 { width: 83px; } .w55 { width: 55px; }
.w21 { width: 21px; } .w97 { width: 97px; } .w38 { width: 38px; } .w240 { width: 240px; } .w75 { width: 75px; }
.w41 { width: 41px; } .w49 { width: 49px; } .w81 { width: 81px; }
.w23 { width: 23px; } .w62 { width: 62px; } .w268 { width: 268px; } .w65 { width: 65px; }

/* flat tab strips */
.tabs { display: flex; align-items: center; }
.tabs button { height: 20px; padding: 0 11px; border-right: 1px solid #a0a0a0; }
.tabs .on {
  height: 20px;
  border: 1px solid #777;
  border-right-color: #fff;
  border-bottom-color: #fff;
  background: #f8f8f8;
}
.low { flex: none; height: 30px; padding: 7px 0 3px 2px; }
.low .on { padding: 0 4px 0 5px; margin-right: 5px; }
.low .on + button { border-left: 1px solid #a0a0a0; }

.lower { flex: 1; min-height: 0; display: flex; margin-bottom: 2px; }
.bot { flex: 1; }
.acts { flex: none; width: 127px; padding: 5px 5px 0 7px; }
.btns { display: grid; grid-template-columns: 1fr 1fr; gap: 5px 6px; padding: 0 8px 0 4px; }
.btns button, .push { height: 23px; border: 1px solid #adadad; background: #e1e1e1; }
.btns .full { grid-column: 1 / 3; }
fieldset {
  margin: 5px 0 0;
  padding: 9px 5px 10px 0;
  border: 1px solid #dcdcdc;
  display: grid;
  grid-template-columns: 67px 1fr;
  row-gap: 7px;
}
legend { padding: 0; margin-left: 6px; }
fieldset label, .dradio label { display: flex; align-items: center; gap: 2px; white-space: nowrap; }
input[type="radio"] {
  appearance: none;
  flex: none;
  width: 13px;
  height: 13px;
  margin: 0;
  border: 1px solid #444;
  border-radius: 50%;
  background: #fff;
}
input[type="radio"]:checked { background: radial-gradient(#222 0 3px, #fff 4px); }

/* status bar */
.status { flex: none; height: 21px; display: flex; gap: 2px; padding-top: 1px; background: #f0f0f0; }
.status > span {
  height: 20px;
  padding: 0 0 0 1px;
  border: 1px solid #d4d4d4;
  border-left-color: #fff;
  background: #f8f8f8;
  overflow: hidden;
  white-space: nowrap;
  line-height: 17px;
}
.s1 { flex: 345; } .s2 { flex: 345; } .s3 { flex: 208; } .s4 { flex: 228; } .s5 { flex: 232; }

/* taskbar */
.task { flex: none; height: 40px; display: flex; background: #020b0e; color: #fff; font-family: "Open Sans", "Noto Sans CJK SC", sans-serif; }
.start { width: 48px; background: #000; display: flex; align-items: center; justify-content: center; }
.start svg { width: 16px; height: 16px; }
.search { width: 344px; background: #333; display: flex; align-items: center; padding: 0 13px 0 9px; gap: 5px; }
.search input { flex: 1; min-width: 0; border: 0; padding: 0; background: none; color: #aaa; font: 14px/20px "Noto Sans CJK SC", sans-serif; }
.search input::placeholder { color: #a0a0a0; }
.ring { width: 22px; height: 22px; }
.mic { width: 12px; height: 18px; margin-right: 2px; }
.apps { display: flex; }
.apps button { width: 38px; display: flex; align-items: center; justify-content: center; }
.apps button:first-child { width: 49px; }
.apps .a2, .apps .a3 { width: 51px; }
.apps .a4 { width: 48px; }
.apps .a5 { width: 43px; }
.apps svg { width: 24px; height: 24px; }
.apps .run { border-bottom: 2px solid #76b9ed; width: 30px; margin: 0 4px; padding-top: 2px; }
.tray { margin-left: auto; display: flex; align-items: center; white-space: nowrap; }
.cpu, .clock { text-align: center; line-height: 17px; }
.link { margin-right: 17px; }
.cpu { width: 49px; margin-right: 20px; }
.t1 { width: 12px; height: 12px; margin-right: 10px; }
.t2 { width: 17px; height: 16px; margin-right: 10px; }
.t3 { width: 14px; height: 14px; margin-right: 7px; }
.t4 { width: 16px; height: 14px; margin-right: 9px; }
.t5 { width: 23px; height: 14px; margin-right: 10px; }
.ime { margin-right: 14px; }
.t6 { width: 16px; height: 16px; margin-right: 16px; }
.clock { width: 61px; margin-right: 18px; }
.t7 { width: 18px; height: 18px; margin-right: 24px; }

/* query dialog */
.dlg {
  position: absolute;
  left: 388px;
  top: 82px;
  width: 852px;
  height: 513px;
  border: 1px solid #a0a0a0;
  background: #f0f0f0;
  box-shadow: 1px 3px 10px #0005;
  display: flex;
  flex-direction: column;
}
.dt { flex: none; height: 30px; display: flex; align-items: center; gap: 35px; padding: 0 17px 2px 7px; background: #fff; color: #999; }
.dt h2 { margin: 0 auto 0 -30px; }
.dt button svg { width: 11px; height: 11px; }
.dbar { flex: none; height: 27px; display: flex; }
.dbar .tabs { margin-right: auto; padding: 0 0 5px 0; }
.dbar .tabs button:first-child { padding-left: 6px; }
.dbar .tabs button:nth-child(2) { padding: 0 16px 0 10px; }
.dbar .tabs .on { padding: 0 11px 0 5px; margin: 0 5px; }
.dbar .tabs button:nth-child(4) { border-left: 1px solid #a0a0a0; }
.push { width: 73px; margin: 3px 5px 0 0; }
.push + .push { width: 70px; margin-right: 0; border-right: 0; }
.dmain { flex: 1; min-height: 0; display: flex; }
.dl { flex: none; width: 218px; padding-right: 4px; display: flex; flex-direction: column; }
.dl select {
  appearance: none;
  height: 20px;
  width: 215px;
  padding: 0 20px 0 1px;
  border: 1px solid #adadad;
  border-radius: 0;
  color: #000;
  font: inherit;
  background: linear-gradient(45deg, transparent 50%, #666 50% 60%, transparent 60%) 198px 5px / 6px 6px no-repeat, linear-gradient(-45deg, transparent 50%, #666 50% 60%, transparent 60%) 203px 5px / 6px 6px no-repeat, #e1e1e1;
}
.dtabs { flex: none; display: flex; align-items: flex-end; height: 23px; border-bottom: 1px solid #dcdcdc; margin-top: 1px; }
.dtabs button { height: 19px; padding: 0 4px; border: 1px solid #dcdcdc; border-bottom: 0; }
.dtabs .on { height: 21px; padding: 0 6px 0 5px; background: #fff; }
.dtree { flex: 1; min-height: 0; margin: 2px 2px 0 3px; border: 1px solid #828790; background: #fff; padding: 1px; display: flex; flex-direction: column; }
.tv { flex: 1; min-height: 0; display: flex; }
.tv ul { flex: 1; min-width: 0; overflow: hidden; padding-left: 4px; }
.tv li { display: flex; align-items: center; height: 16px; line-height: 16px; white-space: nowrap; }
.tv li > i { flex: none; width: 19px; height: 16px; }
.tv .v { background: repeating-linear-gradient(#999 0 1px, transparent 1px 2px) 9px 0 / 1px 16px no-repeat; }
.tv .t {
  background:
    repeating-linear-gradient(#999 0 1px, transparent 1px 2px) 9px 0 / 1px 16px no-repeat,
    repeating-linear-gradient(90deg, #999 0 1px, transparent 1px 2px) 9px 8px / 8px 1px no-repeat;
}
.tv .t.h { background-size: 1px 8px, 8px 1px; }
.tv li > svg { width: 9px; height: 9px; margin: 0 5px; }
.tv .k { color: #aaa; }
.pick { background: #d9d9d9; padding-right: 4px; margin-left: -3px; padding-left: 3px; }
.tv .vs { width: 16px; }
.dradio { flex: none; height: 41px; display: flex; align-items: center; gap: 20px; padding-left: 14px; }
.dradio label { gap: 9px; }
.dradio input[type="radio"] { width: 11px; height: 11px; border-color: #999; }
.dr { flex: 1; min-width: 0; border: 1px solid #828790; border-width: 1px 0 0 1px; background: #fff; padding: 1px; }
.g.q { width: 554px; }

.marks { position: absolute; left: 0; top: 0; width: 1366px; height: 768px; pointer-events: none; }

/* input method bar */
.sogou {
  position: absolute;
  right: 0;
  top: 577px;
  width: 191px;
  height: 24px;
  display: flex;
  align-items: center;
  gap: 6px;
  border: 1px solid #b0cce4;
  border-right: 0;
  background: #fff;
  color: #1a6fc8;
  font-weight: bold;
  font-size: 14px;
}
.sogou svg { width: 16px; height: 16px; }
.sogou .logo { width: 28px; height: 28px; margin: 0 0 0 -16px; }
```
